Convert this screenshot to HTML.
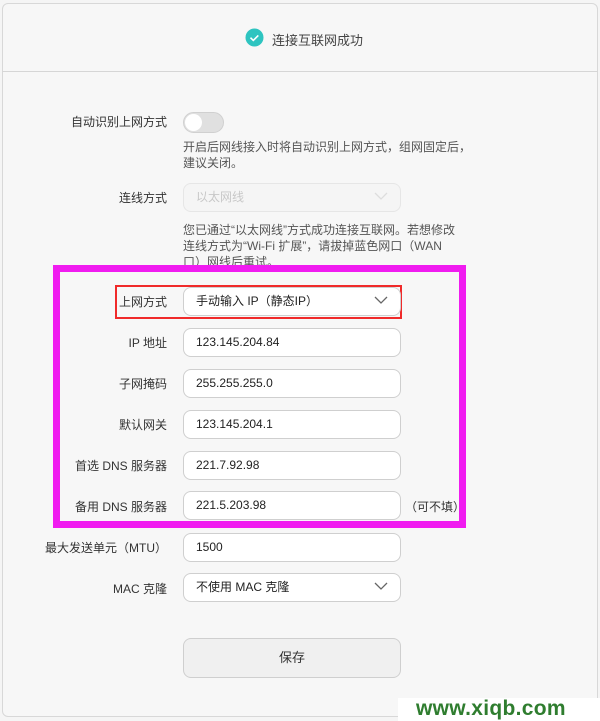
<!DOCTYPE html>
<html><head><meta charset="utf-8"><style>
*{margin:0;padding:0;box-sizing:border-box}
body{width:600px;height:721px;background:#f5f5f5;font-family:"Liberation Sans","Noto Sans CJK SC",sans-serif;font-size:12px;color:#333;position:relative;overflow:hidden}
.card{position:absolute;left:2px;top:3px;width:596px;height:714px;border:1px solid #d8d8d8;border-radius:6px;background:#f7f7f7}
.hline{position:absolute;left:2px;right:2px;top:71px;height:1px;background:#d6d6d6}
.a{position:absolute}
.lbl{position:absolute;right:433px;text-align:right;white-space:nowrap;color:#333}
.inp{position:absolute;left:183px;width:218px;height:29px;border:1px solid #cfcfcf;border-radius:8px;background:#fff;padding-left:12px;line-height:27px;color:#222}
.chev{position:absolute;right:12px;top:8px;width:14px;height:9px}
.help{position:absolute;left:183px;color:#555;line-height:16px;white-space:nowrap}
</style></head><body>
<div class="card"></div>
<div class="hline"></div>
<svg class="a" style="left:245px;top:28px" width="19" height="19"><circle cx="9.5" cy="9.5" r="9" fill="#2ec4c0"/><path d="M5.5 9.7l2.8 2.7 5-5" stroke="#fff" stroke-width="1.6" fill="none"/></svg>
<div class="a" style="left:272px;top:30px;font-size:13px;color:#444">连接互联网成功</div>

<div class="lbl" style="top:113px">自动识别上网方式</div>
<div class="a" style="left:183px;top:112px;width:41px;height:21px;border-radius:11px;background:#e0e0e0;border:1px solid #d0d0d0"><div style="position:absolute;left:1px;top:1px;width:17px;height:17px;border-radius:50%;background:#fff"></div></div>
<div class="help" style="top:139px">开启后网线接入时将自动识别上网方式，组网固定后，<br>建议关闭。</div>

<div class="lbl" style="top:189px">连线方式</div>
<div class="inp" style="top:183px;border-color:#e6e6e6;background:#f5f5f5;color:#c8c8c8">以太网线<svg class="chev" viewBox="0 0 14 9"><path d="M1 1l6 6 6-6" stroke="#ddd" stroke-width="1.3" fill="none"/></svg></div>
<div class="help" style="top:222px">您已通过“以太网线”方式成功连接互联网。若想修改<br>连线方式为“Wi-Fi 扩展”，请拔掉蓝色网口（WAN<br>口）网线后重试。</div>

<div class="a" style="left:53px;top:265px;width:413px;height:263px;border:7px solid #f01cf0;background:#f7f7f7"></div>
<div class="a" style="left:115px;top:285px;width:287px;height:34px;border:2px solid #f02a2a"></div>

<div class="lbl" style="top:293px">上网方式</div>
<div class="inp" style="top:287px">手动输入 IP（静态IP）<svg class="chev" viewBox="0 0 14 9"><path d="M1 1l6 6 6-6" stroke="#666" stroke-width="1.3" fill="none"/></svg></div>
<div class="lbl" style="top:334px">IP 地址</div>
<div class="inp" style="top:328px">123.145.204.84</div>
<div class="lbl" style="top:375px">子网掩码</div>
<div class="inp" style="top:369px">255.255.255.0</div>
<div class="lbl" style="top:416px">默认网关</div>
<div class="inp" style="top:410px">123.145.204.1</div>
<div class="lbl" style="top:457px">首选 DNS 服务器</div>
<div class="inp" style="top:451px">221.7.92.98</div>
<div class="lbl" style="top:498px">备用 DNS 服务器</div>
<div class="inp" style="top:491px">221.5.203.98</div>
<div class="a" style="left:405px;top:498px">（可不填）</div>

<div class="lbl" style="top:539px">最大发送单元（MTU）</div>
<div class="inp" style="top:533px">1500</div>
<div class="lbl" style="top:580px">MAC 克隆</div>
<div class="inp" style="top:573px">不使用 MAC 克隆<svg class="chev" viewBox="0 0 14 9"><path d="M1 1l6 6 6-6" stroke="#666" stroke-width="1.3" fill="none"/></svg></div>

<div class="a" style="left:183px;top:638px;width:218px;height:40px;border:1px solid #cfcfcf;border-radius:8px;background:#f0f0f0;text-align:center;line-height:38px;font-size:13px">保存</div>

<div class="a" style="left:398px;top:698px;width:202px;height:23px;background:#fff"></div>
<div class="a" style="left:416px;top:697px;font-size:21px;font-weight:bold;color:#2f7d2f;font-family:'Liberation Sans',sans-serif;letter-spacing:0.3px">www.xiqb.com</div>
</body></html>
